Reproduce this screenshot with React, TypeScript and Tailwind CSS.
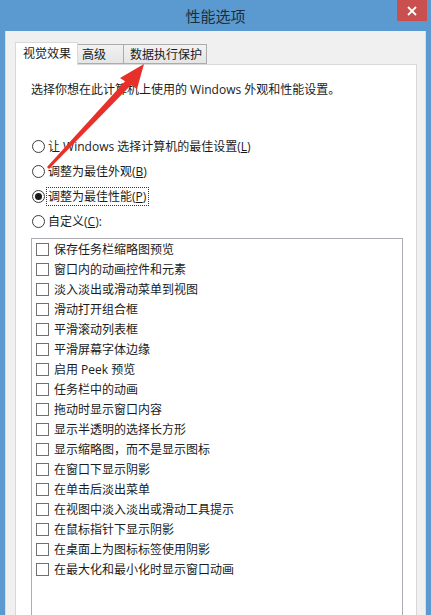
import React, { useState } from 'react';

const FONT = {
  fontFamily: '"Segoe UI", "Open Sans", "Noto Sans CJK SC", sans-serif',
};

const RADIOS = [
  { label: '让 Windows 选择计算机的最佳设置', key: 'L' },
  { label: '调整为最佳外观', key: 'B' },
  { label: '调整为最佳性能', key: 'P' },
  { label: '自定义', key: 'C', suffix: ':' },
];

const OPTIONS = [
  '保存任务栏缩略图预览',
  '窗口内的动画控件和元素',
  '淡入淡出或滑动菜单到视图',
  '滑动打开组合框',
  '平滑滚动列表框',
  '平滑屏幕字体边缘',
  '启用 Peek 预览',
  '任务栏中的动画',
  '拖动时显示窗口内容',
  '显示半透明的选择长方形',
  '显示缩略图，而不是显示图标',
  '在窗口下显示阴影',
  '在单击后淡出菜单',
  '在视图中淡入淡出或滑动工具提示',
  '在鼠标指针下显示阴影',
  '在桌面上为图标标签使用阴影',
  '在最大化和最小化时显示窗口动画',
];

const App: React.FC = () => {
  const [mode, setMode] = useState(2);
  const [checked, setChecked] = useState<boolean[]>(OPTIONS.map(() => false));

  return (
    <div
      className="relative w-[431px] h-[615px] overflow-hidden bg-[#5a9ad0] text-[12px] text-[#1b1b1b]"
      style={FONT}>
      {/* title bar */}
      <div className="relative h-[31px] flex items-center justify-center">
        <span className="text-[15px] text-[#1f2d3a] pt-[1px]">性能选项</span>
        <button className="absolute right-[4px] top-0 w-[30px] h-[21px] bg-[#c9504f] flex items-center justify-center">
          <svg width="10" height="10" viewBox="0 0 10 10">
            <path d="M1 1 L9 9 M9 1 L1 9" stroke="#fff" strokeWidth="1.8" />
          </svg>
        </button>
      </div>

      {/* window body */}
      <div className="mx-[5px] h-[584px] bg-[#f0f0f0] border-l border-r border-[#cfdfee] pl-[9px] pr-[8px] pt-[11px]">
        {/* tabs */}
        <div className="relative z-10 flex items-end h-[22px]">
          <div className="w-[63px] h-[23px] -mb-px bg-white border border-b-0 border-[#d9d9d9] pl-[7px] pt-[1px] leading-[20px]">
            视觉效果
          </div>
          <div className="w-[46px] h-[20px] bg-gradient-to-b from-[#f2f2f2] to-[#e5e5e5] border border-l-0 border-[#acacac] pl-[4px] leading-[19px]">
            高级
          </div>
          <div className="w-[83px] h-[20px] bg-gradient-to-b from-[#f2f2f2] to-[#e5e5e5] border border-l-0 border-[#acacac] pl-[6px] leading-[19px]">
            数据执行保护
          </div>
        </div>

        {/* panel */}
        <div className="h-[600px] bg-white border border-[#d9d9d9] pl-[15px] pr-[13px] pt-[15px]">
          <div className="leading-[20px]">
            选择你想在此计算机上使用的 Windows 外观和性能设置。
          </div>

          <div className="mt-[34px] flex flex-col">
            {RADIOS.map((r, i) => (
              <label
                key={r.key}
                className="h-[25px] flex items-center cursor-default"
                onClick={() => setMode(i)}>
                <span className="ml-[1px] w-[13px] h-[13px] rounded-full border border-[#3c3c3c] bg-white flex items-center justify-center">
                  {mode === i && (
                    <span className="w-[7px] h-[7px] rounded-full bg-[#1b1b1b]" />
                  )}
                </span>
                <span
                  className={
                    mode === i && i === 2
                      ? 'ml-[1px] pl-[1px] pr-[2px] border border-dotted border-[#333] leading-[17px]'
                      : 'ml-[3px] leading-[17px]'
                  }>
                  {r.label}(<span className="underline">{r.key}</span>)
                  {r.suffix}
                </span>
              </label>
            ))}
          </div>

          {/* custom list */}
          <div className="mt-[4px] w-[372px] h-[400px] border border-[#abadb3] pl-[4px]">
            {OPTIONS.map((o, i) => (
              <div
                key={o}
                className="h-[20px] flex items-center"
                onClick={() =>
                  setChecked((c) => c.map((v, j) => (j === i ? !v : v)))
                }>
                <span className="w-[13px] h-[13px] border border-[#707070] bg-white flex items-center justify-center">
                  {checked[i] && (
                    <svg width="9" height="9" viewBox="0 0 9 9">
                      <path d="M1 4.5 L3.5 7 L8 1.5" fill="none" stroke="#222" strokeWidth="1.5" />
                    </svg>
                  )}
                </span>
                <span className="ml-[5px] leading-[17px]">{o}</span>
              </div>
            ))}
          </div>
        </div>
      </div>

      {/* red annotation arrow */}
      <svg
        className="absolute left-0 top-0 pointer-events-none"
        width="431"
        height="615"
        viewBox="0 0 431 615">
        <polygon points="47,167 49,169 133,83 128,78" fill="#e8302a" />
        <polygon points="144,64 120,78 137,89" fill="#e8302a" />
      </svg>
    </div>
  );
};

export default App;
